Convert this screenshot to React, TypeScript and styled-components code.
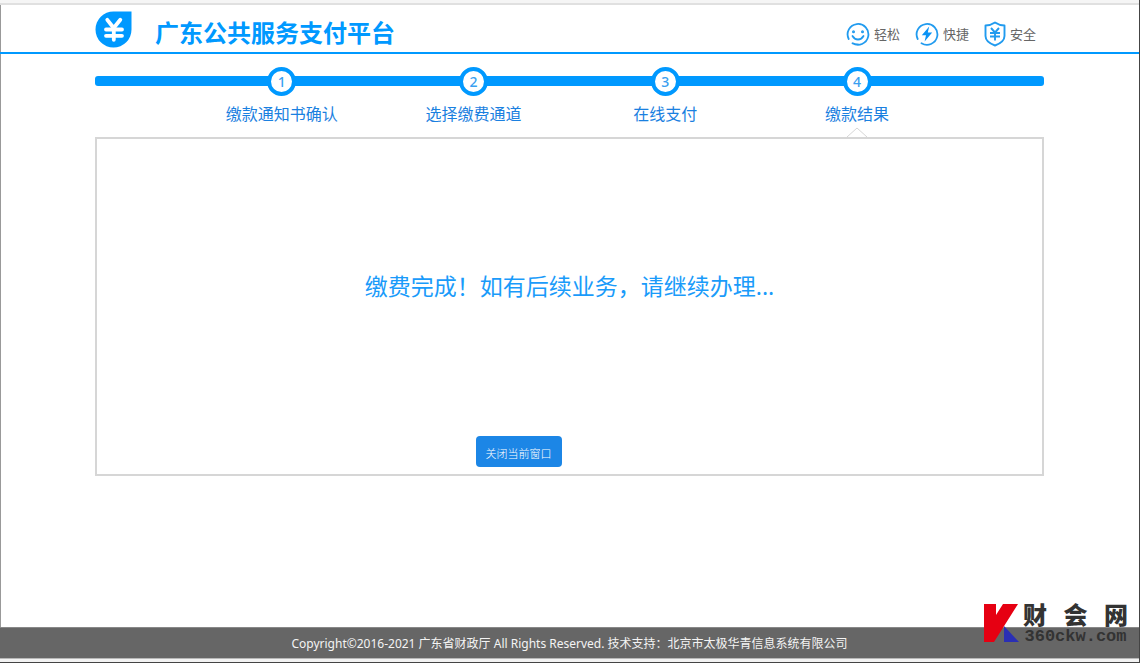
import React from "react";
import styled, { createGlobalStyle } from "styled-components";

const BLUE = "#0099ff";
const SANS = '"Noto Sans", "Noto Sans CJK SC", sans-serif';

const GlobalStyle = createGlobalStyle`
  *, *::before, *::after { box-sizing: border-box; }
  body { margin: 0; background: #fff; font-family: ${SANS}; }
`;

const Page = styled.div`
  position: relative;
  display: flex;
  flex-direction: column;
  min-height: 100vh;
  border: solid #444;
  border-width: 0 1px 1px 0;
  box-shadow: inset 1px 0 0 #999;
`;

const TopStrip = styled.div`
  height: 5px;
  background: #f5f5f5;
  border-bottom: 2px solid #e0e0e0;
`;

const Header = styled.header`
  border-bottom: 2px solid ${BLUE};
`;

const Container = styled.div`
  width: calc(100% - 64px);
  max-width: 949px;
  margin: 0 auto;
`;

const HeaderRow = styled(Container)`
  display: flex;
  align-items: flex-end;
  min-height: 47px;
  padding-bottom: 4px;
`;

const Title = styled.h1`
  margin: 0 auto 0 23px;
  color: ${BLUE};
  font-size: 24px;
  line-height: 30px;
  font-weight: 700;
`;

const Features = styled.ul`
  display: flex;
  gap: 15px;
  margin: 0;
  padding: 0 8px 1px 0;
  list-style: none;
`;

const Feature = styled.li`
  display: flex;
  align-items: center;
  gap: 4px;
  height: 26px;
  color: #666;
  font-size: 13px;
  line-height: 20px;
`;

const Main = styled.main`
  flex: 1;
  padding: 13px 0 32px;
`;

const Steps = styled.ol`
  position: relative;
  display: grid;
  grid-template-columns: repeat(4, 1fr);
  margin: 0;
  padding: 0 91px;
  list-style: none;

  &::before {
    content: "";
    position: absolute;
    top: 9px;
    left: 0;
    right: 0;
    height: 10px;
    border-radius: 3px;
    background: ${BLUE};
  }
`;

const Step = styled.li`
  position: relative;
  display: flex;
  flex-direction: column;
  align-items: center;
  gap: 6px;
  height: 70px;
  color: #1a80e0;
  font-size: 16px;
  line-height: 24px;
`;

const StepNumber = styled.span`
  display: flex;
  align-items: center;
  justify-content: center;
  width: 29px;
  height: 29px;
  border: 4px solid ${BLUE};
  border-radius: 50%;
  background: #fff;
  color: #3a9ff0;
  font-size: 14px;
  font-weight: 500;
  line-height: 20px;
`;

const Pointer = styled.svg`
  position: absolute;
  bottom: 0;
  left: calc(50% - 11px);
`;

const Panel = styled.section`
  display: flex;
  flex-direction: column;
  align-items: center;
  min-height: 339px;
  padding: 130px 16px 7px;
  border: 2px solid #d6d6d6;
`;

const Message = styled.p`
  margin: 0 0 132px;
  color: #1a9bfa;
  font-size: 23px;
  line-height: 34px;
`;

const CloseButton = styled.button`
  width: 86px;
  height: 31px;
  margin: auto 102px 0 0;
  padding: 2px 0 0;
  border: 0;
  border-radius: 4px;
  background: #1c86e6;
  color: #fff;
  font-family: "Noto Sans CJK SC", sans-serif;
  font-size: 11px;
  font-weight: 300;
  line-height: 16px;
  white-space: nowrap;
  cursor: pointer;
`;

const Footer = styled.footer`
  padding: 7px 16px 5px;
  border-top: 1px solid #888;
  background: #666;
  color: #f4f4f4;
  font-size: 12px;
  line-height: 18px;
  text-align: center;
`;

const BottomStrip = styled.div`
  height: 4px;
  border-top: 1px solid #b8b8b8;
  background: #f2f2f2;
`;

const Watermark = styled.div`
  position: absolute;
  right: 11px;
  bottom: 16px;
  display: flex;
  gap: 3px;
  color: #333;
`;

const WatermarkText = styled.div`
  display: flex;
  flex-direction: column;
  width: 105px;
`;

const WatermarkName = styled.div`
  display: flex;
  justify-content: space-between;
  font-family: "Liberation Serif", "Noto Sans CJK SC", serif;
  font-size: 24px;
  font-weight: 900;
  line-height: 24px;
`;

const WatermarkSite = styled.div`
  font-family: "Liberation Mono", monospace;
  font-size: 17px;
  font-weight: 700;
  line-height: 18px;
  text-align: center;
`;

const Logo = () => (
  <svg width="37" height="37" viewBox="0 0 37 37" aria-hidden="true">
    <path d="M18.500 .5H36.500V18.500A18 18 0 1 1 18.500 .5Z" fill={BLUE} />
    <g fill="none" stroke="#fff" strokeWidth="3.800" strokeLinecap="round" strokeLinejoin="round">
      <path d="M12.300 8.800L18.700 17L25.300 8.800" />
      <path d="M11 18.500H27M11 24.800H27M18.800 18V28.800" />
    </g>
  </svg>
);

const SmileIcon = () => (
  <svg width="24" height="24" viewBox="0 0 24 24" fill="none" stroke="#219bef" strokeWidth="1.800" strokeLinecap="round" aria-hidden="true">
    <path d="M2.700 17A10.400 10.400 0 1 1 6.500 21.200M6.800 21.400A10.400 10.400 0 0 0 12 22.400" />
    <path d="M6.500 14Q8.500 17.500 12 17.500T17.500 14" />
    <circle cx="7.500" cy="9.800" r=".6" fill="#219bef" />
    <circle cx="16.500" cy="9.800" r=".6" fill="#219bef" />
  </svg>
);

const BoltIcon = () => (
  <svg width="24" height="24" viewBox="0 0 24 24" fill="none" stroke="#219bef" strokeWidth="1.800" strokeLinecap="round" aria-hidden="true">
    <path d="M2.700 17A10.400 10.400 0 1 1 6.500 21.200" />
    <path d="M14.200 4.500L6.800 13.200H11L9.600 19.500L17.200 10.500H12.800Z" fill="#0a93f5" stroke="none" />
  </svg>
);

const ShieldIcon = () => (
  <svg width="22" height="26" viewBox="0 0 22 26" fill="none" stroke="#219bef" strokeWidth="1.900" strokeLinejoin="round" aria-hidden="true">
    <path d="M11 1.500Q15 4.300 20.500 4.500V15Q20.500 21 11 24.500Q1.500 21 1.500 15V4.500Q7 4.300 11 1.500Z" />
    <path d="M7 7L11 11.500L15 7M6 12H16M6 15.500H16M11 12V19.500" />
  </svg>
);

const WatermarkLogo = () => (
  <svg width="36" height="38" viewBox="0 0 36 38" aria-hidden="true">
    <path d="M0 0H12V11L19 0H34L10 38H0Z" fill="#e60012" />
    <path d="M20 22L35 38H20Z" fill="#2a2fb5" />
  </svg>
);

const features = [
  { label: "轻松", Icon: SmileIcon },
  { label: "快捷", Icon: BoltIcon },
  { label: "安全", Icon: ShieldIcon },
];

const steps = ["缴款通知书确认", "选择缴费通道", "在线支付", "缴款结果"];
const currentStep = 3;

export default function App() {
  return (
    <>
      <GlobalStyle />
      <Page>
        <TopStrip />
        <Header>
          <HeaderRow>
            <Logo />
            <Title>广东公共服务支付平台</Title>
            <Features>
              {features.map(({ label, Icon }) => (
                <Feature key={label}>
                  <Icon />
                  {label}
                </Feature>
              ))}
            </Features>
          </HeaderRow>
        </Header>
        <Main>
          <Container>
            <Steps>
              {steps.map((label, i) => (
                <Step key={label} aria-current={i === currentStep ? "step" : undefined}>
                  <StepNumber>{i + 1}</StepNumber>
                  {label}
                  {i === currentStep && (
                    <Pointer width="22" height="10" viewBox="0 0 22 10" aria-hidden="true">
                      <path d="M1 10L11 1L21 10" fill="#fff" stroke="#d6d6d6" />
                    </Pointer>
                  )}
                </Step>
              ))}
            </Steps>
            <Panel>
              <Message>缴费完成！如有后续业务，请继续办理...</Message>
              <CloseButton type="button">关闭当前窗口</CloseButton>
            </Panel>
          </Container>
        </Main>
        <Footer>
          Copyright©2016-2021 广东省财政厅 All Rights Reserved. 技术支持：北京市太极华青信息系统有限公司
        </Footer>
        <BottomStrip />
        <Watermark>
          <WatermarkLogo />
          <WatermarkText>
            <WatermarkName>
              <span>财</span>
              <span>会</span>
              <span>网</span>
            </WatermarkName>
            <WatermarkSite>360ckw.com</WatermarkSite>
          </WatermarkText>
        </Watermark>
      </Page>
    </>
  );
}
